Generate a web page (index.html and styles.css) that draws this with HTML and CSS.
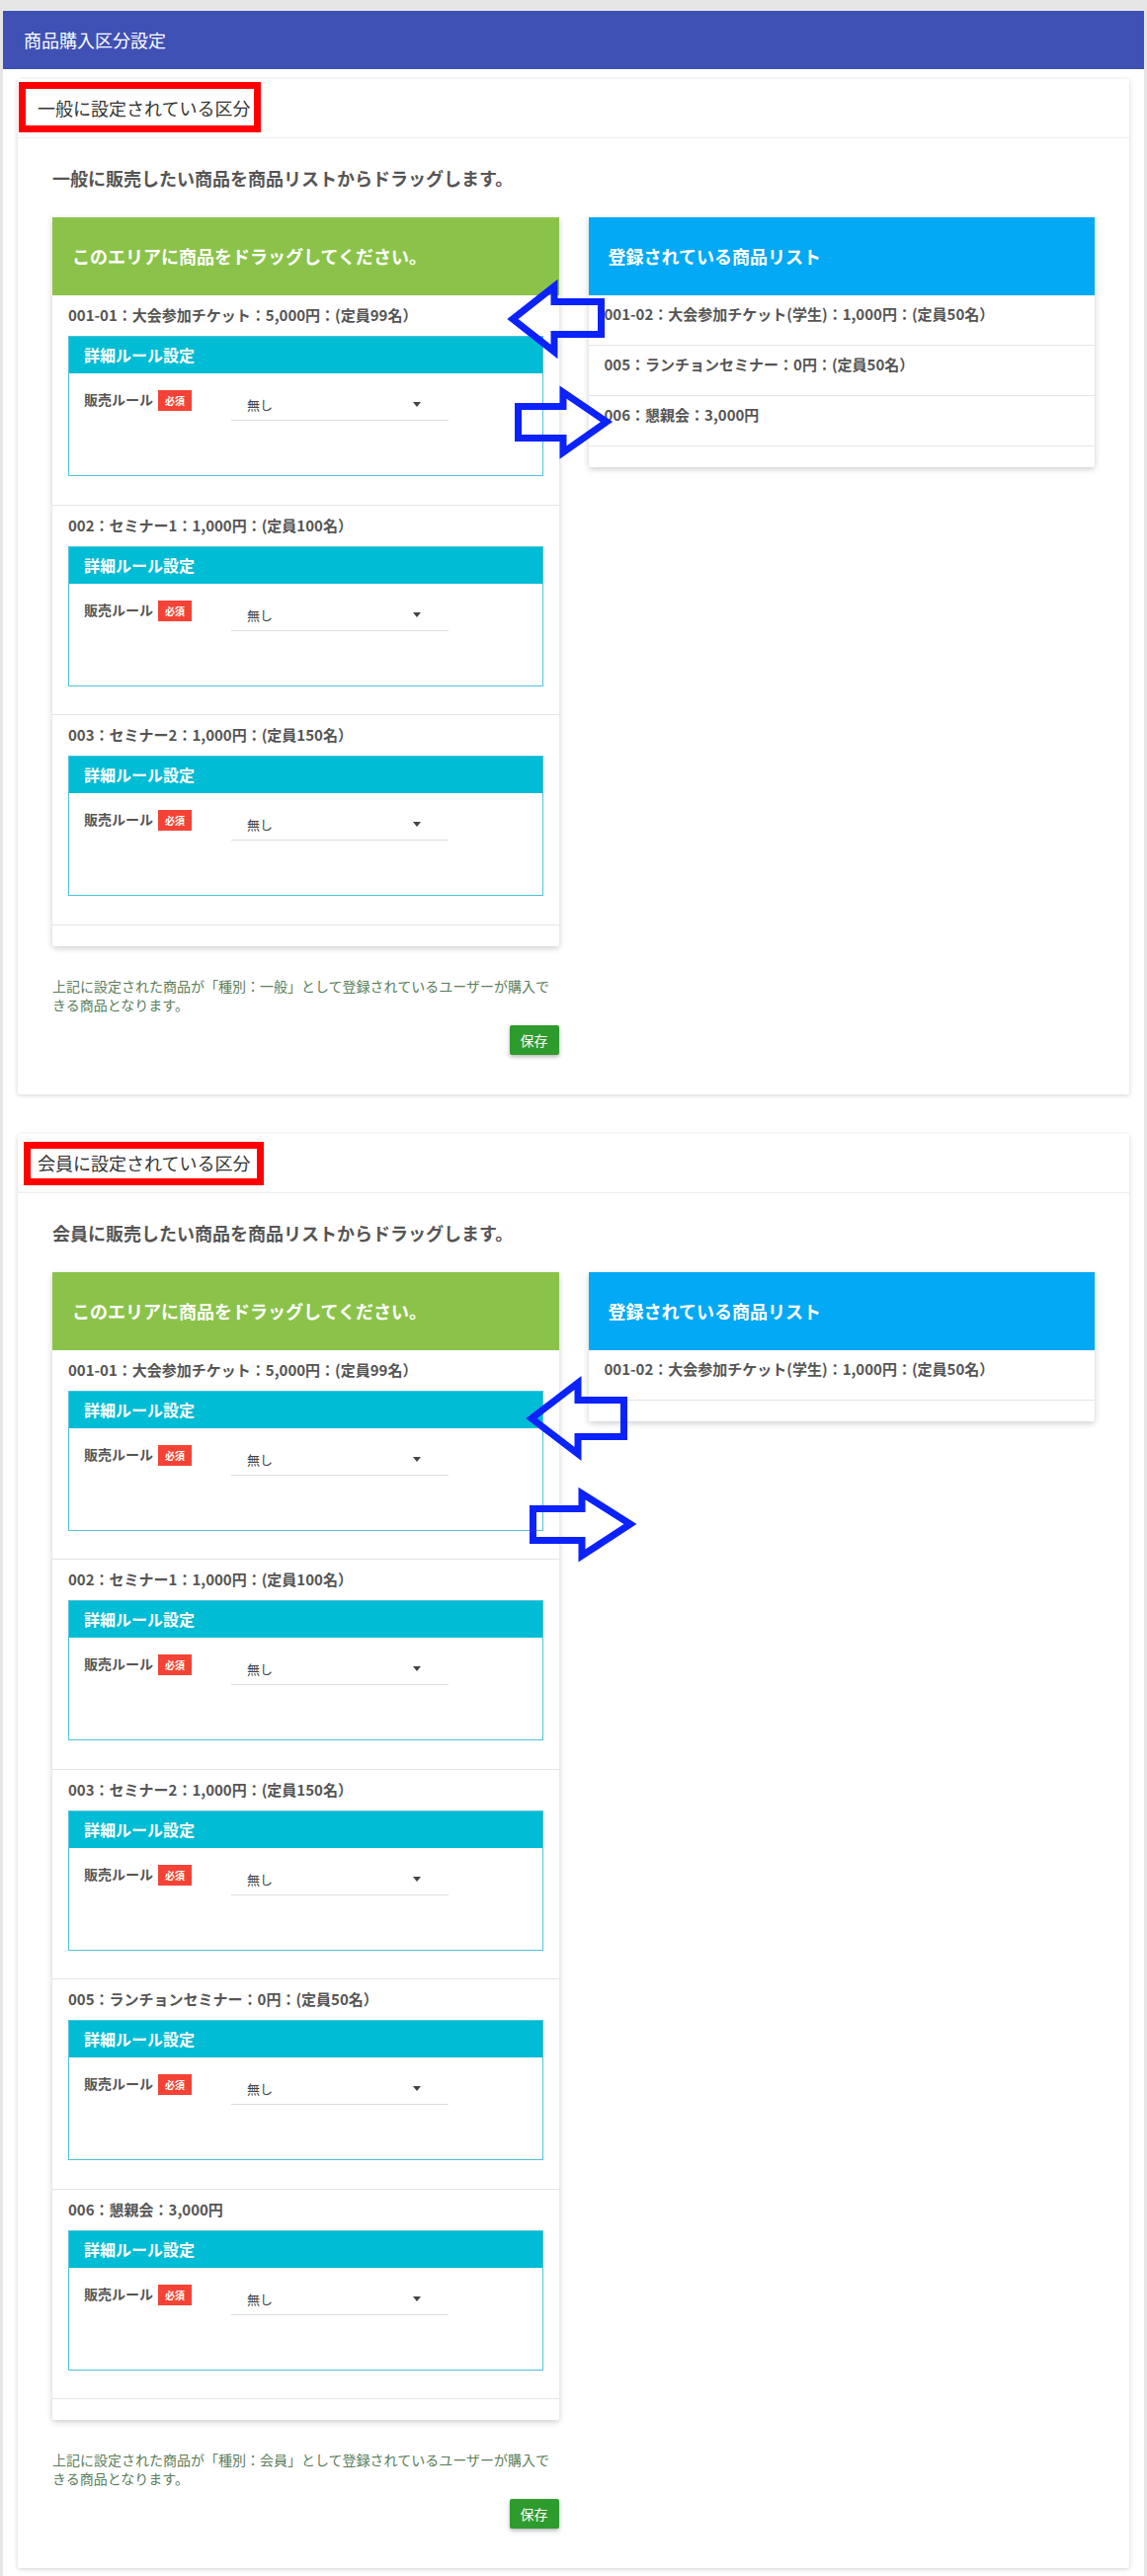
FILE: index.html
```html
<!DOCTYPE html>
<html lang="ja">

<head>
    <meta charset="UTF-8">
    <meta name="viewport" content="width=device-width, initial-scale=1.0">
    <title>商品購入区分設定</title>
    <link rel="stylesheet" href="styles.css">
</head>

<body>
    <div class="page">
        <div class="topbar">商品購入区分設定</div>

        <div class="content">
            <!-- 一般 -->
            <div class="section">
                <div class="section-head">一般に設定されている区分</div>
                <div class="section-body">
                    <p class="lead">一般に販売したい商品を商品リストからドラッグします。</p>
                    <div class="columns">
                        <div class="col">
                            <div class="panel">
                                <div class="panel-head green">このエリアに商品をドラッグしてください。</div>
                                <div class="item">
                                    <div class="item-title">001-01：大会参加チケット：5,000円：(定員99名）</div>
                                    <div class="rule-box">
                                        <div class="rule-head">詳細ルール設定</div>
                                        <div class="rule-body">
                                            <div class="rule-label">販売ルール<span class="badge">必須</span></div>
                                            <div class="select"><span>無し</span><span class="caret"></span></div>
                                        </div>
                                    </div>
                                </div>
                                <div class="item">
                                    <div class="item-title">002：セミナー1：1,000円：(定員100名）</div>
                                    <div class="rule-box">
                                        <div class="rule-head">詳細ルール設定</div>
                                        <div class="rule-body">
                                            <div class="rule-label">販売ルール<span class="badge">必須</span></div>
                                            <div class="select"><span>無し</span><span class="caret"></span></div>
                                        </div>
                                    </div>
                                </div>
                                <div class="item">
                                    <div class="item-title">003：セミナー2：1,000円：(定員150名）</div>
                                    <div class="rule-box">
                                        <div class="rule-head">詳細ルール設定</div>
                                        <div class="rule-body">
                                            <div class="rule-label">販売ルール<span class="badge">必須</span></div>
                                            <div class="select"><span>無し</span><span class="caret"></span></div>
                                        </div>
                                    </div>
                                </div>
                            </div>
                            <p class="note">上記に設定された商品が「種別：一般」として登録されているユーザーが購入できる商品となります。</p>
                            <div class="actions"><button class="save">保存</button></div>
                        </div>
                        <div class="col">
                            <div class="panel">
                                <div class="panel-head blue">登録されている商品リスト</div>
                                <div class="list-item">001-02：大会参加チケット(学生)：1,000円：(定員50名）</div>
                                <div class="list-item">005：ランチョンセミナー：0円：(定員50名）</div>
                                <div class="list-item">006：懇親会：3,000円</div>
                            </div>
                        </div>
                    </div>
                </div>
                <svg class="marks">
                    <rect class="redbox" x="4.5" y="6.5" width="238" height="44" />
                    <polygon class="arrow" points="501,243 543,210 543,225.5 590.5,225.5 590.5,258.5 543,258.5 543,276" />
                    <polygon class="arrow" points="506.5,331.5 552,331.5 552,317 596,347 552,378 552,363.5 506.5,363.5" />
                </svg>
            </div>

            <!-- 会員 -->
            <div class="section">
                <div class="section-head">会員に設定されている区分</div>
                <div class="section-body">
                    <p class="lead">会員に販売したい商品を商品リストからドラッグします。</p>
                    <div class="columns">
                        <div class="col">
                            <div class="panel">
                                <div class="panel-head green">このエリアに商品をドラッグしてください。</div>
                                <div class="item">
                                    <div class="item-title">001-01：大会参加チケット：5,000円：(定員99名）</div>
                                    <div class="rule-box">
                                        <div class="rule-head">詳細ルール設定</div>
                                        <div class="rule-body">
                                            <div class="rule-label">販売ルール<span class="badge">必須</span></div>
                                            <div class="select"><span>無し</span><span class="caret"></span></div>
                                        </div>
                                    </div>
                                </div>
                                <div class="item">
                                    <div class="item-title">002：セミナー1：1,000円：(定員100名）</div>
                                    <div class="rule-box">
                                        <div class="rule-head">詳細ルール設定</div>
                                        <div class="rule-body">
                                            <div class="rule-label">販売ルール<span class="badge">必須</span></div>
                                            <div class="select"><span>無し</span><span class="caret"></span></div>
                                        </div>
                                    </div>
                                </div>
                                <div class="item">
                                    <div class="item-title">003：セミナー2：1,000円：(定員150名）</div>
                                    <div class="rule-box">
                                        <div class="rule-head">詳細ルール設定</div>
                                        <div class="rule-body">
                                            <div class="rule-label">販売ルール<span class="badge">必須</span></div>
                                            <div class="select"><span>無し</span><span class="caret"></span></div>
                                        </div>
                                    </div>
                                </div>
                                <div class="item">
                                    <div class="item-title">005：ランチョンセミナー：0円：(定員50名）</div>
                                    <div class="rule-box">
                                        <div class="rule-head">詳細ルール設定</div>
                                        <div class="rule-body">
                                            <div class="rule-label">販売ルール<span class="badge">必須</span></div>
                                            <div class="select"><span>無し</span><span class="caret"></span></div>
                                        </div>
                                    </div>
                                </div>
                                <div class="item">
                                    <div class="item-title">006：懇親会：3,000円</div>
                                    <div class="rule-box">
                                        <div class="rule-head">詳細ルール設定</div>
                                        <div class="rule-body">
                                            <div class="rule-label">販売ルール<span class="badge">必須</span></div>
                                            <div class="select"><span>無し</span><span class="caret"></span></div>
                                        </div>
                                    </div>
                                </div>
                            </div>
                            <p class="note">上記に設定された商品が「種別：会員」として登録されているユーザーが購入できる商品となります。</p>
                            <div class="actions"><button class="save">保存</button></div>
                        </div>
                        <div class="col">
                            <div class="panel">
                                <div class="panel-head blue">登録されている商品リスト</div>
                                <div class="list-item">001-02：大会参加チケット(学生)：1,000円：(定員50名）</div>
                            </div>
                        </div>
                    </div>
                </div>
                <svg class="marks">
                    <rect class="redbox" x="9.5" y="11.5" width="236" height="37" />
                    <polygon class="arrow" points="520,288 567,252 567,269.5 613.5,269.5 613.5,306.5 567,306.5 567,324" />
                    <polygon class="arrow" points="521.5,379.5 571,379.5 571,364 620,395 571,427 571,411.5 521.5,411.5" />
                </svg>
            </div>
        </div>
    </div>
</body>

</html>
```

FILE: styles.css
```css
* {
    box-sizing: border-box;
}

body {
    margin: 0;
    background: #e6e6e6;
    font-family: "Noto Sans CJK JP", "Noto Sans", sans-serif;
    color: #555;
}

.page {
    margin: 11px 3px 0;
    background: #fff;
    padding-bottom: 9px;
}

.topbar {
    height: 59px;
    line-height: 59px;
    padding-left: 21px;
    background: #3f51b5;
    color: #fff;
    font-size: 18px;
}

.content {
    padding: 10px 15px 0;
}

/* 区分カード */
.section {
    position: relative;
    background: #fff;
    border-radius: 2px;
    box-shadow: 0 1px 5px rgba(0, 0, 0, 0.18);
    margin-bottom: 40px;
}

.section:last-child {
    margin-bottom: 0;
}

.section-head {
    height: 60px;
    line-height: 59px;
    padding-left: 20px;
    border-bottom: 1px solid #eee;
    font-size: 18px;
    color: #333;
}

.section-body {
    padding: 27px 35px 40px;
}

.lead {
    margin: 0 0 27px;
    font-size: 18px;
    font-weight: bold;
    line-height: 26px;
    color: #555;
}

.columns {
    display: grid;
    grid-template-columns: 1fr 1fr;
    column-gap: 30px;
    align-items: start;
}

.panel {
    background: #fff;
    border-radius: 2px;
    box-shadow: 0 2px 6px rgba(0, 0, 0, 0.2);
    padding-bottom: 21px;
}

.panel-head {
    height: 79px;
    line-height: 79px;
    padding-left: 20px;
    color: #fff;
    font-size: 18px;
    font-weight: bold;
}

.panel-head.green {
    background: #8bc34a;
}

.panel-head.blue {
    background: #03a9f4;
}

/* ドラッグされた商品 */
.item {
    padding: 10px 16px 28.5px;
    border-bottom: 1px solid #e4e4e4;
}

.item-title,
.list-item {
    font-size: 15px;
    font-weight: bold;
    line-height: 20px;
    color: #555;
}

.item-title {
    margin-bottom: 11px;
}

.list-item {
    padding: 9px 16px 21px;
    border-bottom: 1px solid #e4e4e4;
}

.rule-box {
    height: 142px;
    border: 1px solid #4fc3d9;
}

.rule-head {
    height: 37px;
    line-height: 37px;
    padding-left: 15px;
    background: #00bcd4;
    color: #fff;
    font-size: 16px;
    font-weight: bold;
}

.rule-body {
    display: flex;
    align-items: flex-start;
    padding: 14px 15px 0;
}

.rule-label {
    width: 149px;
    display: flex;
    align-items: flex-start;
    font-size: 14px;
    font-weight: bold;
    line-height: 24px;
    color: #555;
}

.badge {
    margin: 3px 0 0 5px;
    width: 34px;
    height: 21px;
    line-height: 21px;
    text-align: center;
    background: #f44336;
    color: #fff;
    font-size: 10px;
    font-weight: bold;
}

.select {
    width: 220px;
    height: 34px;
    display: flex;
    align-items: center;
    justify-content: space-between;
    padding: 2px 28px 0 16px;
    border-bottom: 1px solid #ddd;
    font-size: 13px;
    color: #444;
}

.caret {
    width: 0;
    height: 0;
    border-left: 4px solid transparent;
    border-right: 4px solid transparent;
    border-top: 5px solid #444;
}

.note {
    margin: 31px 0 11px;
    font-size: 14px;
    line-height: 19px;
    color: #5a7d5a;
}

.actions {
    display: flex;
    justify-content: flex-end;
}

.save {
    width: 50px;
    height: 30px;
    padding: 0;
    border: 0;
    border-radius: 2px;
    background: #2e9b2e;
    color: #fff;
    font-family: inherit;
    font-size: 14px;
    box-shadow: 0 2px 4px rgba(0, 0, 0, 0.3);
    cursor: pointer;
}

/* 説明用の注釈（赤枠・矢印） */
.marks {
    position: absolute;
    left: 0;
    top: 0;
    width: 100%;
    height: 100%;
    overflow: visible;
    pointer-events: none;
}

.redbox {
    fill: none;
    stroke: #ff0000;
    stroke-width: 7;
}

.arrow {
    fill: none;
    stroke: #0b22fb;
    stroke-width: 7;
    stroke-linejoin: miter;
}
```
